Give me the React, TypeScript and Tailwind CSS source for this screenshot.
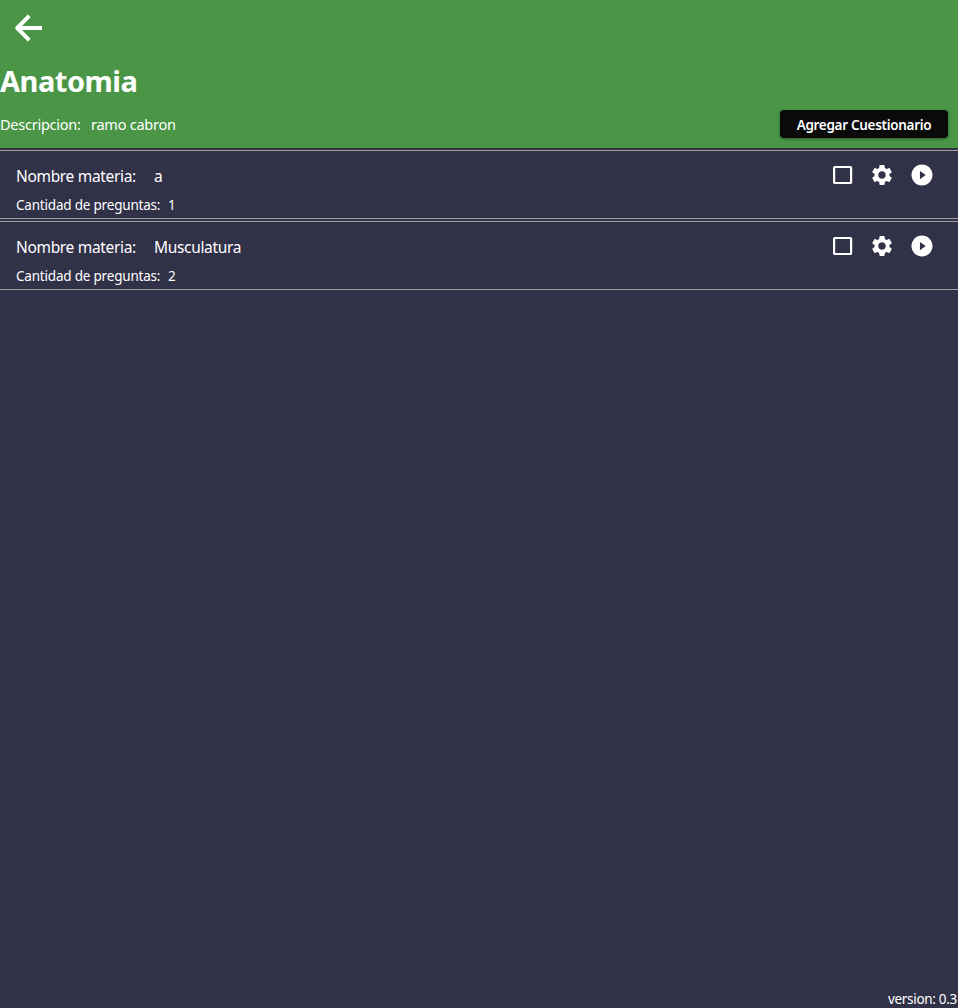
import { MdSettings } from "react-icons/md";
import { AiFillPlayCircle } from "react-icons/ai";

const quizzes = [
  { name: "a", questions: 1 },
  { name: "Musculatura", questions: 2 },
];

function BackIcon() {
  return (
    <svg width="40" height="40" viewBox="0 0 40 40" fill="none" stroke="white" strokeWidth="4">
      <path d="M34 20H10.5M21.2 7.8L9.2 20L21.2 32.2" strokeLinejoin="round" />
    </svg>
  );
}

function CheckboxIcon() {
  return (
    <svg width="26" height="26" viewBox="0 0 26 26" fill="none" stroke="white" strokeWidth="2.2">
      <rect x="5.1" y="5" width="17" height="16" rx="0.8" />
    </svg>
  );
}

function QuizRow({ name, questions }: { name: string; questions: number }) {
  return (
    <li className="flex h-[69px] justify-between border-y border-[#a0a0a0] pr-[23px] pl-4">
      <div className="whitespace-nowrap">
        <div className="mt-[13px] flex h-6 items-center text-[15.5px] leading-6">
          <span className="w-[138px]"><span className="tracking-[-0.33px]">Nombre materia:</span></span>
          <span className="tracking-[-0.33px]">{name}</span>
        </div>
        <div className="mt-[7px] flex text-[13.5px] leading-5">
          <span className="w-[152px]"><span className="tracking-[-0.2px]">Cantidad de preguntas:</span></span>
          <span>{questions}</span>
        </div>
      </div>
      <div className="mt-[11px] flex h-[26px] gap-[14px]">
        <button aria-label="Seleccionar"><CheckboxIcon /></button>
        <button aria-label="Configurar"><MdSettings size={26} viewBox="-0.5 -0.5 25 25" /></button>
        <button aria-label="Iniciar"><AiFillPlayCircle size={26} viewBox="-42.5 -42.5 1109 1109" /></button>
      </div>
    </li>
  );
}

export default function App() {
  return (
    <div className="flex h-screen flex-col overflow-hidden bg-[#313148] font-['Noto_Sans','Open_Sans',sans-serif] text-white">
      <header className="h-[148px] shrink-0 bg-[#4a9646]">
        <button className="mt-2 ml-2 block size-10" aria-label="Volver"><BackIcon /></button>
        <h1 className="mt-[13px] h-10 text-[29px] leading-10 font-bold tracking-[-0.5px] whitespace-nowrap">Anatomia</h1>
        <div className="mt-[9px] flex h-7 items-center justify-between pr-[10px]">
          <p className="flex text-[14.5px] leading-5 whitespace-nowrap">
            <span className="w-[91px]"><span className="tracking-[-0.25px]">Descripcion:</span></span>
            <span className="tracking-[-0.25px]">ramo cabron</span>
          </p>
          <button className="h-7 w-[168px] rounded-[4px] bg-[#0a0a0a] pt-px text-[13.5px] leading-7 font-semibold whitespace-nowrap shadow-[0_1px_3px_rgba(0,0,0,0.4)]">
            <span className="tracking-[-0.3px]">Agregar Cuestionario</span>
          </button>
        </div>
      </header>
      <ul className="flex flex-1 flex-col gap-0.5 pt-0.5">
        {quizzes.map((q) => <QuizRow key={q.name} {...q} />)}
      </ul>
      <footer className="h-[18px] pr-px text-right text-[13.5px] leading-[19px]">
        <span className="tracking-[-0.3px]">version: 0.3</span>
      </footer>
    </div>
  );
}
